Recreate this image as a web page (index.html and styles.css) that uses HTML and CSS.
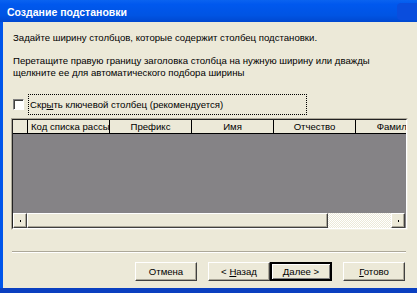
FILE: index.html
```html
<!DOCTYPE html>
<html lang="ru">
<head>
<meta charset="utf-8">
<title>Создание подстановки</title>
<link rel="stylesheet" href="styles.css">
</head>
<body>
<div class="win">
  <div class="titlebar"><span class="title">Создание подстановки</span><span class="tbtn"></span></div>
  <div class="content">
    <p class="line1">Задайте ширину столбцов, которые содержит столбец подстановки.</p>
    <p class="line2">Перетащите правую границу заголовка столбца на нужную ширину или дважды<br>щелкните ее для автоматического подбора ширины</p>
    <div class="checkrow">
      <span class="checkbox"></span>
      <span class="checklabel">Скр<u>ы</u>ть ключевой столбец (рекомендуется)</span>
    </div>
    <div class="grid">
      <div class="grid-inner">
        <div class="header">
          <div class="hcell sel"></div>
          <div class="hcell left">Код списка рассылки</div>
          <div class="hcell">Префикс</div>
          <div class="hcell">Имя</div>
          <div class="hcell">Отчество</div>
          <div class="hcell last">Фамилия</div>
        </div>
        <div class="body"></div>
        <div class="hscroll">
          <div class="sbtn"><span class="dot"></span></div>
          <div class="thumb"></div>
          <div class="track"></div>
          <div class="sbtn"><span class="dot"></span></div>
        </div>
      </div>
    </div>
    <div class="sep"></div>
    <div class="buttons">
      <button class="btn">Отмена</button>
      <div class="pair">
        <button class="btn">&lt; <u>Н</u>азад</button>
        <button class="btn def"><u>Д</u>алее &gt;</button>
      </div>
      <button class="btn"><u>Г</u>отово</button>
    </div>
  </div>
</div>
</body>
</html>
```
FILE: styles.css
```css
* { box-sizing: border-box; }
html, body { margin: 0; padding: 0; }
body { width: 417px; height: 293px; overflow: hidden; background: #ECE9D8; font-family: "Liberation Sans", Arial, sans-serif; font-size: 9.6px; color: #000; }
.win { width: 417px; height: 293px; display: flex; flex-direction: column; border-bottom: 5px solid #0A3FC0; overflow: hidden; }
.titlebar { height: 22px; flex: none; background: linear-gradient(#0A63F0 0%, #0058EE 20%, #0054E3 70%, #0048D0 100%); display: flex; align-items: center; padding-left: 7px; padding-top: 1px; overflow: hidden; }
.title { color: #fff; font-weight: bold; font-size: 10.5px; }
.tbtn { margin-left: auto; margin-right: -12px; width: 32px; height: 17px; border-radius: 4px; background: #0A4DDD; flex: none; }
.content { flex: 1; border-left: 3px solid #0055EA; padding-left: 10px; display: flex; flex-direction: column; min-height: 0; }
p { margin: 0; line-height: 12px; }
.line1 { margin-top: 10px; }
.line2 { margin-top: 11px; }
.checkrow { margin-top: 15px; height: 21px; flex: none; display: flex; align-items: center; }
.checkbox { width: 11px; height: 11px; background: #fff; border: 1px solid; border-color: #808080 #fff #fff #808080; box-shadow: inset 1px 1px 0 #404040; flex: none; }
.checklabel { margin-left: 4px; height: 21px; width: 279px; border: 1px dotted #000; display: flex; align-items: center; padding-left: 1px; }
.grid { margin-top: 3px; margin-left: -2px; width: 397px; height: 112px; flex: none; border: 1px solid; border-color: #ACA899 #F1EFE2 #F1EFE2 #ACA899; }
.grid-inner { height: 100%; border: 1px solid; border-color: #222 #fff #fff #222; display: flex; flex-direction: column; background: #858386; overflow: hidden; }
.header { height: 14px; flex: none; display: flex; background: #ECE9D8; border-bottom: 1px solid #000; }
.hcell { width: 82px; flex: none; border-right: 1px solid #000; text-align: center; line-height: 13px; white-space: nowrap; overflow: hidden; }
.hcell.sel { width: 15px; }
.hcell.left { text-align: left; padding-left: 3px; }
.hcell.last { width: 82px; border-right: none; }
.body { flex: 1; }
.hscroll { height: 15px; flex: none; display: flex; background: #ECE9D8; margin-right: 1px; }
.sbtn { width: 14px; height: 15px; flex: none; border: 1px solid; border-color: #fff #404040 #404040 #fff; box-shadow: inset -1px -1px 0 #ACA899; display: flex; align-items: center; justify-content: center; }
.dot { width: 1px; height: 2px; background: #000; }
.thumb { width: 301px; height: 15px; flex: none; border: 1px solid; border-color: #fff #404040 #404040 #fff; box-shadow: inset -1px -1px 0 #ACA899; }
.track { flex: 1; background-color: #ECE9D8; background-image: repeating-conic-gradient(#fff 0 25%, #ECE9D8 0 50%); background-size: 2px 2px; }
.sep { margin-top: 21px; margin-left: -1px; width: 394px; height: 2px; flex: none; border-top: 1px solid #ACA899; border-bottom: 1px solid #fff; }
.buttons { margin-top: 9px; display: flex; gap: 11px; justify-content: flex-end; padding-right: 12px; }
.pair { display: flex; gap: 0; }
.btn { width: 62px; height: 19px; padding: 0; margin: 0; font-family: "Liberation Sans", Arial, sans-serif; font-size: 9.6px; color: #000; background: #ECE9D8; border: 1px solid; border-color: #fff #404040 #404040 #fff; box-shadow: inset -1px -1px 0 #ACA899; }
.btn.def { border: 2px solid #000; box-shadow: inset 1px 1px 0 #fff, inset -1px -1px 0 #808080; }
```
